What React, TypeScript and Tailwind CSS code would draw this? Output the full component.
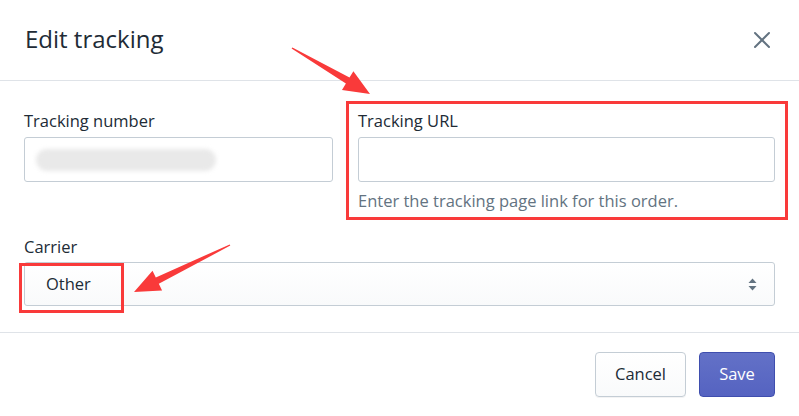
import { X } from 'lucide-react';

const font = { fontFamily: '"Open Sans", "Noto Sans", sans-serif' };

export default function App() {
  return (
    <div className="relative w-[799px] h-[416px] bg-white overflow-hidden text-[#212b36]" style={font}>
      {/* Header */}
      <div className="h-[81px] pl-[25px] pr-[23px] flex items-center justify-between border-b border-[#dfe3e8]">
        <h2 className="text-[24px] leading-none pb-[2px]">Edit tracking</h2>
        <button className="w-[28px] h-[28px] flex items-center justify-center text-[#637381]">
          <X size={28} strokeWidth={1.7} />
        </button>
      </div>

      {/* Body */}
      <div className="px-[24px] pt-[30px] pb-[26px]">
        <div className="grid grid-cols-[309px_1fr] gap-x-[25px]">
          <div>
            <label className="block text-[16.5px] leading-[20px]">Tracking number</label>
            <div className="mt-[6px] h-[45px] rounded-[3px] border border-[#c4cdd5] bg-white flex items-center px-[11px]">
              <div className="h-[22px] w-[180px] rounded-full bg-[#e9e9e9] blur-[2px]" />
            </div>
          </div>
          <div>
            <label className="block text-[16.5px] leading-[20px]">Tracking URL</label>
            <input className="mt-[6px] block w-full h-[45px] rounded-[3px] border border-[#c4cdd5] bg-white outline-none" />
            <p className="mt-[7px] text-[16.5px] leading-[24px] text-[#637381]">
              Enter the tracking page link for this order.
            </p>
          </div>
        </div>

        <div className="mt-[22px]">
          <label className="block text-[16.5px] leading-[24px]">Carrier</label>
          <div className="mt-[3px] h-[44px] rounded-[3px] border border-[#c4cdd5] bg-gradient-to-b from-white to-[#f9fafb] flex items-center justify-between pl-[21px] pr-[17px]">
            <span className="text-[16.5px]">Other</span>
            <svg width="9" height="13" viewBox="0 0 9 13" className="text-[#637381]">
              <path d="M4.5 0.5 L8.5 5 H0.5 Z" fill="currentColor" />
              <path d="M4.5 12.5 L8.5 8 H0.5 Z" fill="currentColor" />
            </svg>
          </div>
        </div>
      </div>

      {/* Footer */}
      <div className="border-t border-[#dfe3e8] px-[24px] pt-[19px] flex justify-end gap-[13px]">
        <button className="h-[45px] w-[91px] rounded-[4px] border border-[#c4cdd5] bg-gradient-to-b from-white to-[#f9fafb] text-[16.5px] text-[#212b36] shadow-[0_1px_0_rgba(22,29,37,0.05)]">
          Cancel
        </button>
        <button className="h-[45px] w-[76px] rounded-[4px] border border-[#3f4eae] bg-gradient-to-b from-[#6371c7] to-[#5563c1] text-[16.5px] text-white">
          Save
        </button>
      </div>

      {/* Annotations */}
      <div className="absolute left-[346px] top-[101px] w-[442px] h-[119px] border-[3px] border-[#f93a3a] pointer-events-none" />
      <div className="absolute left-[19px] top-[263px] w-[105px] h-[50px] border-[3px] border-[#f93a3a] pointer-events-none" />
      <svg className="absolute left-0 top-0 pointer-events-none" width="799" height="416">
        <polygon
          fill="#f93a3a"
          points="291.6,48.6 345.9,83.6 342.0,90.0 370,94 353.4,71.2 349.5,77.6 292.4,47.4"
        />
        <polygon
          fill="#f93a3a"
          points="230.3,245.6 158.8,283.7 162.1,290.5 134,292 152.5,270.7 155.8,277.5 229.7,244.4"
        />
      </svg>
    </div>
  );
}
